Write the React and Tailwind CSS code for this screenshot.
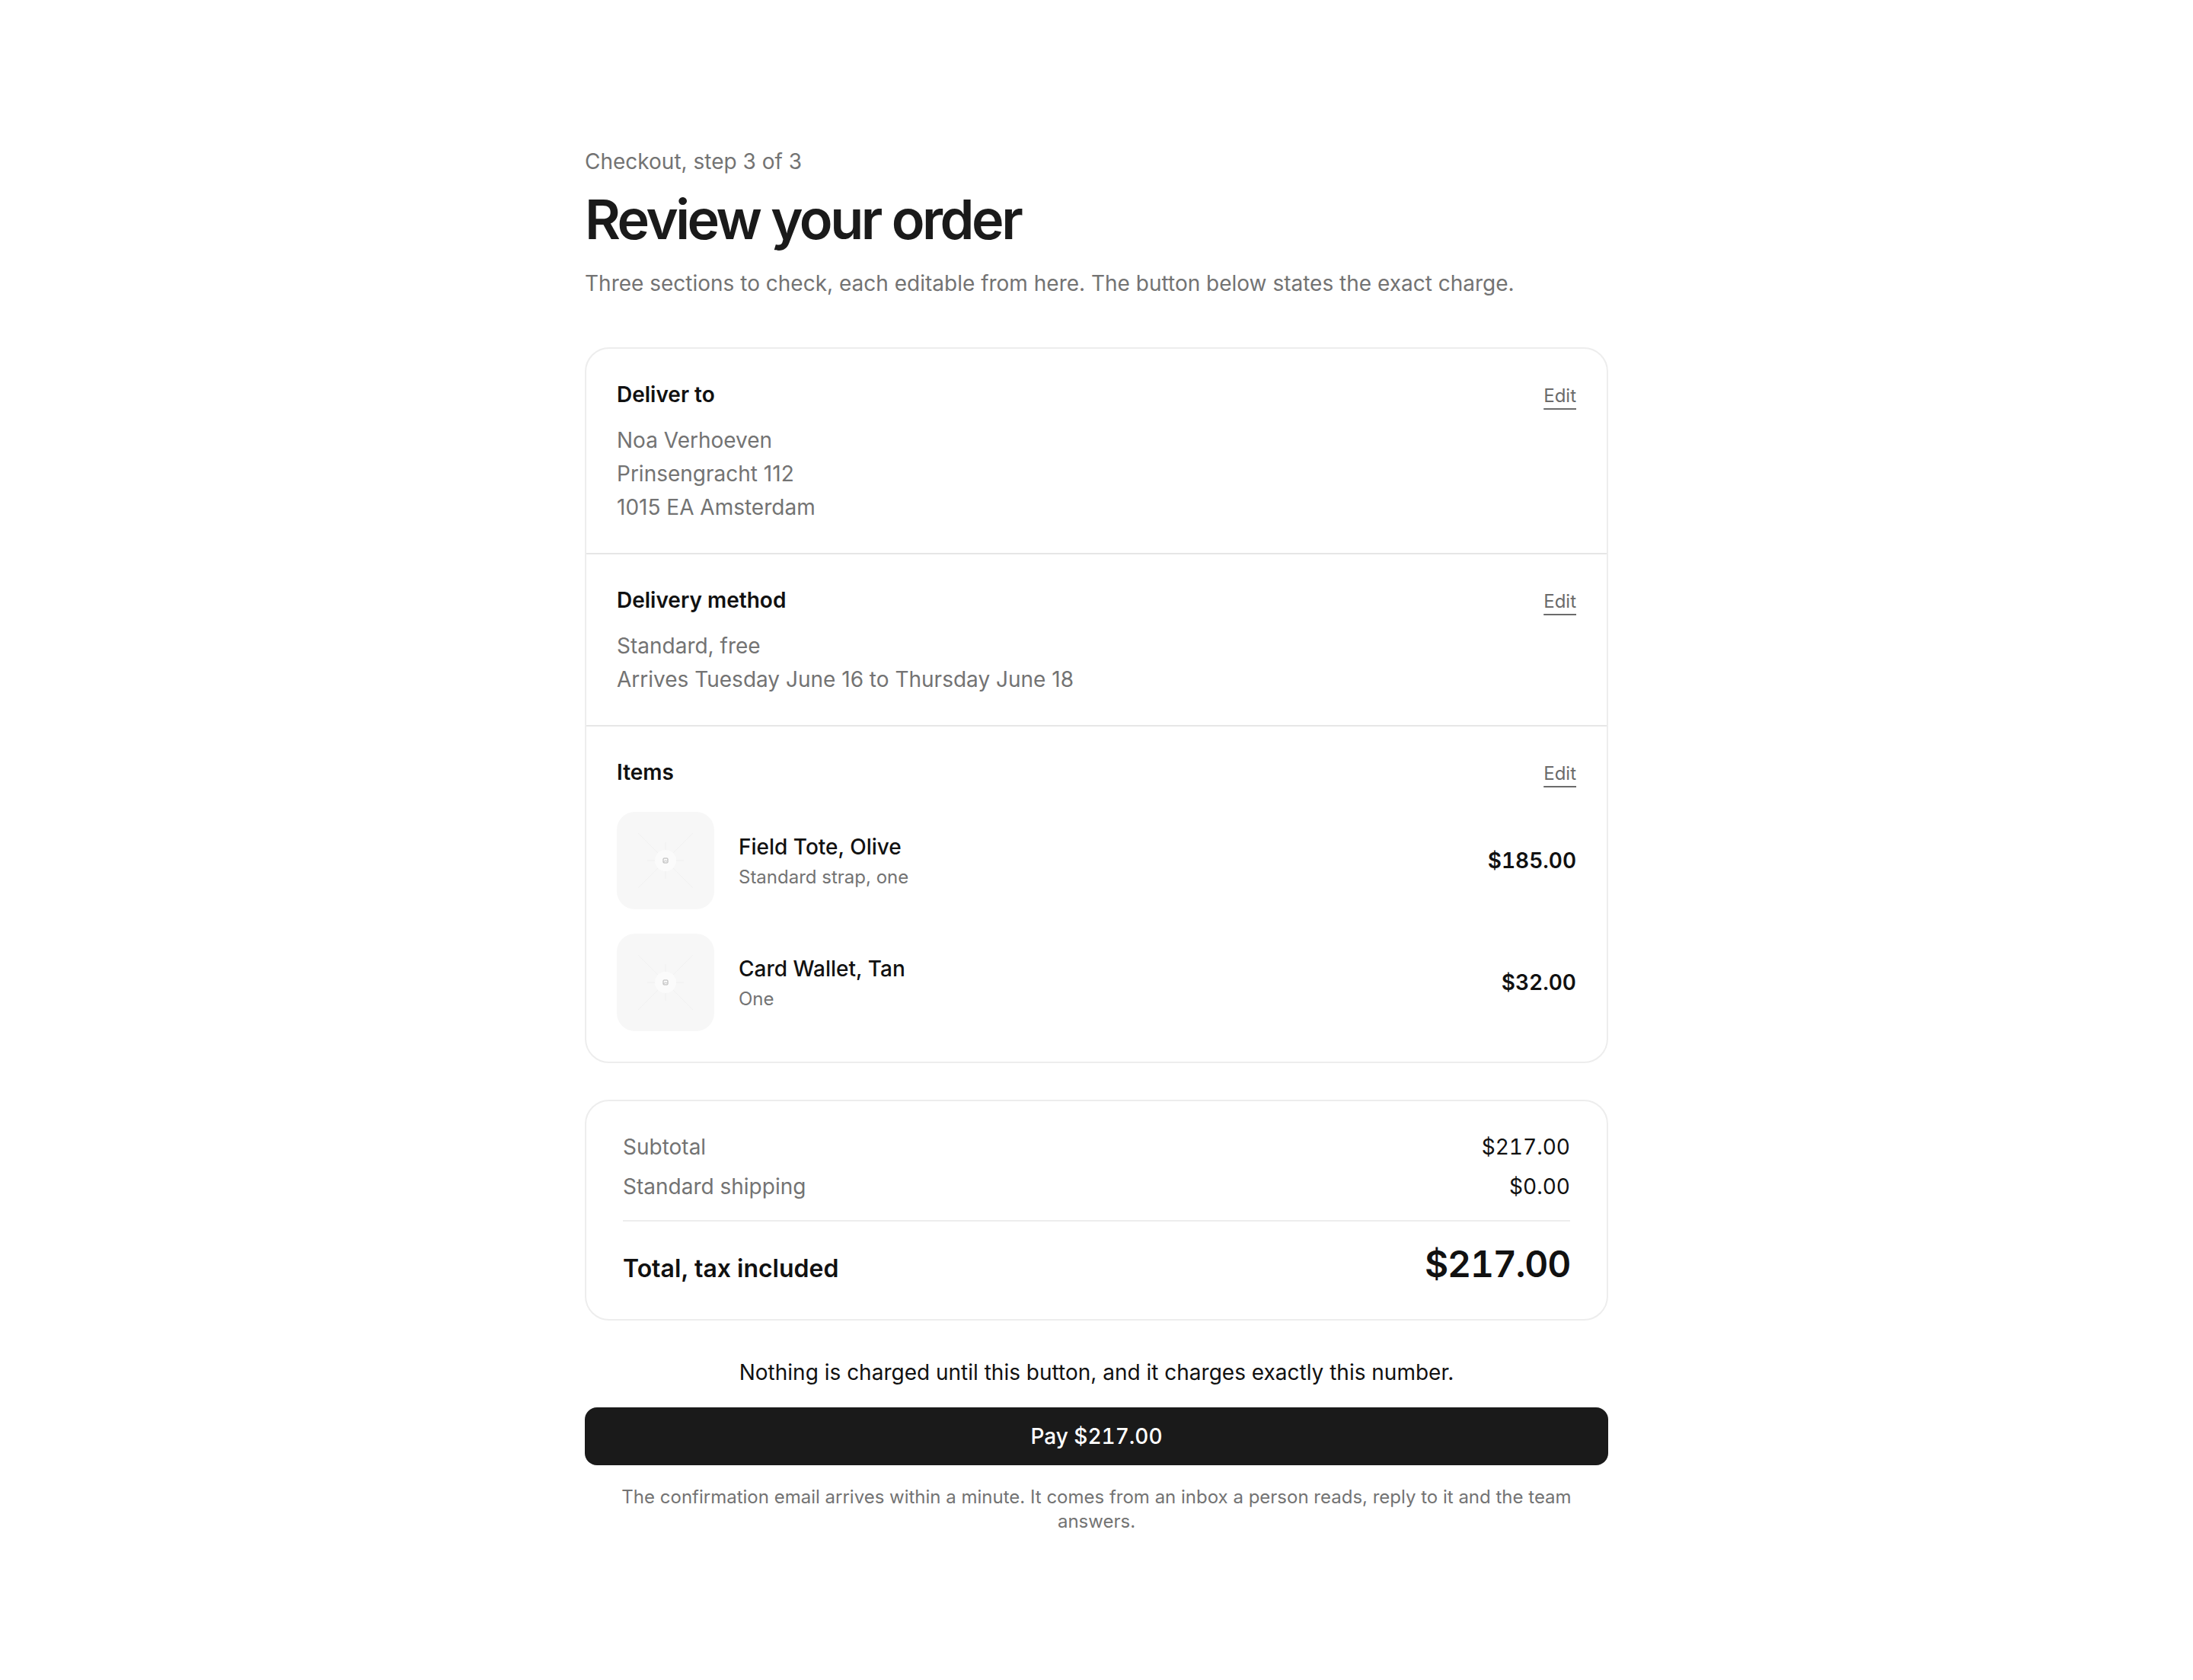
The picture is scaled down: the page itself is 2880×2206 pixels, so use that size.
import React from "react";

function Thumb() {
  return (
    <div className="relative flex h-32 w-32 shrink-0 items-center justify-center overflow-hidden rounded-3xl bg-[#f7f7f7]">
      <svg width="128" height="128" viewBox="0 0 64 64" className="absolute inset-0">
        <g stroke="#efefef" strokeWidth="0.4">
          <line x1="32" y1="32" x2="14" y2="14" />
          <line x1="32" y1="32" x2="50" y2="14" />
          <line x1="32" y1="32" x2="14" y2="50" />
          <line x1="32" y1="32" x2="50" y2="50" />
          <line x1="32" y1="32" x2="32" y2="20" />
          <line x1="32" y1="32" x2="32" y2="44" />
          <line x1="32" y1="32" x2="20" y2="32" />
          <line x1="32" y1="32" x2="44" y2="32" />
        </g>
        <circle cx="32" cy="32" r="7" fill="#fbfbfb" />
        <rect x="30.5" y="30.5" width="3" height="3" rx="0.5" fill="none" stroke="#b0b0b0" strokeWidth="0.5" />
        <path d="M30.8 33.1 L31.8 31.9 L32.5 32.6 L33.2 32" fill="none" stroke="#b0b0b0" strokeWidth="0.4" />
      </svg>
    </div>
  );
}

function SectionHeader({ title }) {
  return (
    <div className="flex items-baseline justify-between">
      <h2 className="text-[28px] leading-[40px] font-semibold text-[#111111]">{title}</h2>
      <button className="text-[24px] leading-[32px] text-[#6b6b6b] underline decoration-2 decoration-[#6b6b6b] underline-offset-8">
        Edit
      </button>
    </div>
  );
}

function Item({ name, detail, price }) {
  return (
    <div className="flex items-center gap-8">
      <Thumb />
      <div className="flex-1">
        <p className="text-[28px] leading-[40px] font-medium text-[#111111]">{name}</p>
        <p className="mt-1 text-[24px] leading-[32px] text-[#737373]">{detail}</p>
      </div>
      <p className="text-[28px] leading-[40px] font-semibold tabular-nums text-[#111111]">{price}</p>
    </div>
  );
}

export default function App() {
  return (
    <div className="min-h-screen bg-white font-['Inter',sans-serif] antialiased">
      <div className="mx-auto max-w-[1344px] pt-[192px] pb-48">
        <p className="text-[28px] leading-[40px] text-[#737373]">Checkout, step 3 of 3</p>
        <h1 className="mt-4 text-[72px] leading-[80px] font-semibold tracking-[-0.048em] text-[#1a1a1a]">
          Review your order
        </h1>
        <p className="mt-6 text-[28px] leading-[40px] text-[#737373]">
          Three sections to check, each editable from here. The button below states the exact charge.
        </p>

        <div className="mt-16 divide-y-2 divide-[#e6e6e6] rounded-[32px] border-2 border-[#ededed]">
          <section className="px-10 pt-10 pb-[38px]">
            <SectionHeader title="Deliver to" />
            <div className="mt-[18px] text-[28px] leading-[44px] text-[#737373]">
              <p>Noa Verhoeven</p>
              <p>Prinsengracht 112</p>
              <p>1015 EA Amsterdam</p>
            </div>
          </section>
          <section className="px-10 pt-10 pb-[38px]">
            <SectionHeader title="Delivery method" />
            <div className="mt-[18px] text-[28px] leading-[44px] text-[#737373]">
              <p>Standard, free</p>
              <p>Arrives Tuesday June 16 to Thursday June 18</p>
            </div>
          </section>
          <section className="px-10 py-10">
            <SectionHeader title="Items" />
            <div className="mt-8 flex flex-col gap-8">
              <Item name="Field Tote, Olive" detail="Standard strap, one" price="$185.00" />
              <Item name="Card Wallet, Tan" detail="One" price="$32.00" />
            </div>
          </section>
        </div>

        <div className="mt-12 rounded-[32px] border-2 border-[#ededed] px-12 py-10">
          <div className="flex flex-col gap-3">
            <div className="flex justify-between text-[28px] leading-[40px]">
              <span className="text-[#737373]">Subtotal</span>
              <span className="tabular-nums text-[#111111]">$217.00</span>
            </div>
            <div className="flex justify-between text-[28px] leading-[40px]">
              <span className="text-[#737373]">Standard shipping</span>
              <span className="tabular-nums text-[#111111]">$0.00</span>
            </div>
          </div>
          <div className="my-6 border-t-2 border-[#ededed]" />
          <div className="flex items-baseline justify-between">
            <span className="text-[32px] leading-[48px] font-semibold text-[#111111]">Total, tax included</span>
            <span className="text-[48px] leading-[64px] font-semibold tracking-tight tabular-nums text-[#111111]">$217.00</span>
          </div>
        </div>

        <p className="mt-[46px] text-center text-[28px] leading-[44px] text-[#111111]">
          Nothing is charged until this button, and it charges exactly this number.
        </p>
        <button className="mt-6 w-full rounded-2xl bg-[#1a1a1a] py-4 text-[28px] leading-[44px] font-medium tabular-nums text-white">
          Pay $217.00
        </button>
        <p className="mt-[26px] text-center text-[24px] leading-[32px] text-[#737373]">
          The confirmation email arrives within a minute. It comes from an inbox a person reads, reply to it and the team answers.
        </p>
      </div>
    </div>
  );
}
